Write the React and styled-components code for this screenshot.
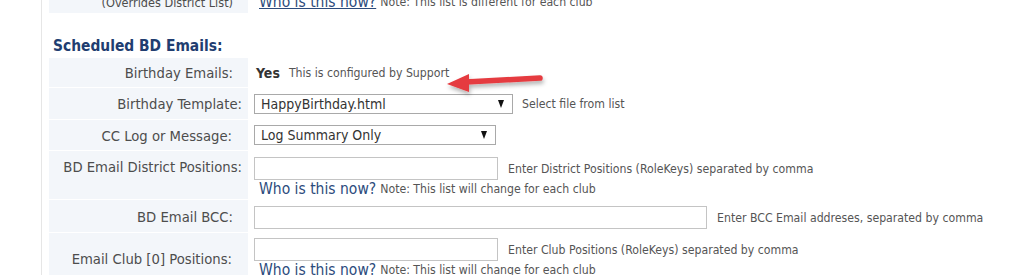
import React from 'react';
import styled, { createGlobalStyle } from 'styled-components';

const GlobalStyle = createGlobalStyle`
	html, body {
		margin: 0;
		padding: 0;
		background: #fff;
		overflow: hidden;
	}
	body {
		font-family: "DejaVu Sans Condensed", "DejaVu Sans", Verdana, sans-serif;
		color: #4a4a4a;
	}
`;

const Page = styled.div`
	position: relative;
	margin-left: 41px;
	border-left: 1px solid #e6e6e6;
	padding-left: 7px;
	height: 275px;
	overflow: hidden;
`;

const Form = styled.div`
	display: grid;
	grid-template-columns: 199px 740px;
	column-gap: 1px;
	row-gap: 1px;
	margin-top: -13px;
`;

const Label = styled.div`
	display: flex;
	justify-content: flex-end;
	align-items: ${props => (props.$top ? 'flex-start' : props.$bottom ? 'flex-end' : 'center')};
	padding-top: ${props => (props.$top ? '7px' : '0')};
	padding-bottom: ${props => (props.$bottom ? '3px' : '0')};
	padding-right: ${props => props.$pr}px;
	height: ${props => props.$h}px;
	box-sizing: border-box;
	background: #f3f6fa;
	font-size: ${props => props.$fs || 14.7}px;
	color: #4d4d4d;
	white-space: nowrap;
`;

const Value = styled.div`
	display: flex;
	flex-direction: column;
	justify-content: ${props => (props.$top ? 'flex-start' : props.$bottom ? 'flex-end' : 'center')};
	padding: ${props => (props.$top ? props.$pt + 'px' : '0')} 0 ${props => (props.$bottom ? '2px' : '0')} 5px;
	height: ${props => props.$h}px;
	box-sizing: border-box;
`;

const Line = styled.div`
	display: flex;
	align-items: center;
	white-space: nowrap;
`;

const Heading = styled.div`
	grid-column: 1 / span 2;
	height: 43px;
	display: flex;
	align-items: flex-end;
	padding: 0 0 2px 4px;
	box-sizing: border-box;
	font-size: 15.4px;
	font-weight: bold;
	color: #213d70;
`;

const Yes = styled.span`
	font-size: 14px;
	font-weight: bold;
	color: #333;
	margin-left: 2px;
`;

const Small = styled.span`
	font-size: 12.2px;
	color: #555;
	margin-left: ${props => props.$ml || 0}px;
`;

const WhoLink = styled.a`
	font-size: 15.5px;
	color: #2c4b7c;
	text-decoration: ${props => (props.$underline ? 'underline' : 'none')};
	margin-left: 5px;
	margin-right: 4px;
	cursor: pointer;
`;

const SelectBox = styled.div`
	display: flex;
	align-items: center;
	justify-content: space-between;
	width: ${props => props.$w}px;
	height: 20px;
	box-sizing: border-box;
	border: 1px solid #a9a9a9;
	background: #fff;
	padding: 0 8px 0 6px;
	font-size: 14px;
	color: #333;
`;

const Caret = styled.span`
	width: 0;
	height: 0;
	border-left: 3.5px solid transparent;
	border-right: 3.5px solid transparent;
	border-top: 8px solid #111;
`;

const TextInput = styled.input`
	width: ${props => props.$w}px;
	height: 23px;
	box-sizing: border-box;
	border: 1px solid #c4c4c4;
	background: #fff;
	margin: 0;
	padding: 0 4px;
	font-family: inherit;
`;

const Arrow = styled.svg`
	position: absolute;
	left: 398px;
	top: 63px;
	overflow: visible;
`;

const rows = [
	{ label: 'Birthday Emails:', h: 29, pr: 15, value: 'yes' },
	{ label: 'Birthday Template:', h: 31, pr: 6, value: 'template' },
	{ label: 'CC Log or Message:', h: 30, pr: 16, value: 'cc' },
	{ label: 'BD Email District Positions:', h: 48, pr: 6, value: 'district', top: true },
	{ label: 'BD Email BCC:', h: 32, pr: 15, value: 'bcc', top: true, labelMid: true },
	{ label: 'Email Club [0] Positions:', h: 50, pr: 16, value: 'club', pt: 5, top: true, labelMid: true }
];

function Who({ underline, note }) {
	return (
		<Line>
			<WhoLink $underline={underline}>Who is this now?</WhoLink>
			<Small>{note}</Small>
		</Line>
	);
}

function renderValue(kind) {
	switch (kind) {
		case 'yes':
			return (
				<Line>
					<Yes>Yes</Yes>
					<Small $ml={9}>This is configured by Support</Small>
				</Line>
			);
		case 'template':
			return (
				<Line>
					<SelectBox $w={259}>
						HappyBirthday.html
						<Caret />
					</SelectBox>
					<Small $ml={9}>Select file from list</Small>
				</Line>
			);
		case 'cc':
			return (
				<Line>
					<SelectBox $w={242}>
						Log Summary Only
						<Caret />
					</SelectBox>
				</Line>
			);
		case 'district':
			return (
				<>
					<Line>
						<TextInput $w={244} />
						<Small $ml={10}>Enter District Positions (RoleKeys) separated by comma</Small>
					</Line>
					<Who note='Note: This list will change for each club' />
				</>
			);
		case 'bcc':
			return (
				<Line>
					<TextInput $w={453} />
					<Small $ml={10}>Enter BCC Email addreses, separated by comma</Small>
				</Line>
			);
		case 'club':
			return (
				<>
					<Line>
						<TextInput $w={244} />
						<Small $ml={10}>Enter Club Positions (RoleKeys) separated by comma</Small>
					</Line>
					<Who note='Note: This list will change for each club' />
				</>
			);
		default:
			return null;
	}
}

export default function App() {
	return (
		<Page>
			<GlobalStyle />
			<Form>
				<Label $h={26} $bottom $pr={15} $fs={12.6}>
					(Overrides District List)
				</Label>
				<Value $h={26} $bottom>
					<Who underline note='Note: This list is different for each club' />
				</Value>

				<Heading>Scheduled BD Emails:</Heading>

				{rows.map(row => (
					<React.Fragment key={row.label}>
						<Label $h={row.h} $top={row.top && !row.labelMid} $pr={row.pr}>
							{row.label}
						</Label>
						<Value $h={row.h} $top={row.top} $pt={row.pt || 6}>
							{renderValue(row.value)}
						</Value>
					</React.Fragment>
				))}
			</Form>
			<Arrow width='110' height='32' viewBox='0 0 110 32'>
				<defs>
					<filter id='shadow' x='-20%' y='-50%' width='140%' height='220%'>
						<feDropShadow dx='1' dy='3' stdDeviation='2' floodColor='#000' floodOpacity='0.3' />
					</filter>
				</defs>
				<g filter='url(#shadow)'>
					<line x1='26' y1='19' x2='100' y2='15' stroke='#e53a3f' strokeWidth='5.5' strokeLinecap='round' />
					<polygon points='7,21 29,11 29,29' fill='#e53a3f' />
				</g>
			</Arrow>
		</Page>
	);
}
